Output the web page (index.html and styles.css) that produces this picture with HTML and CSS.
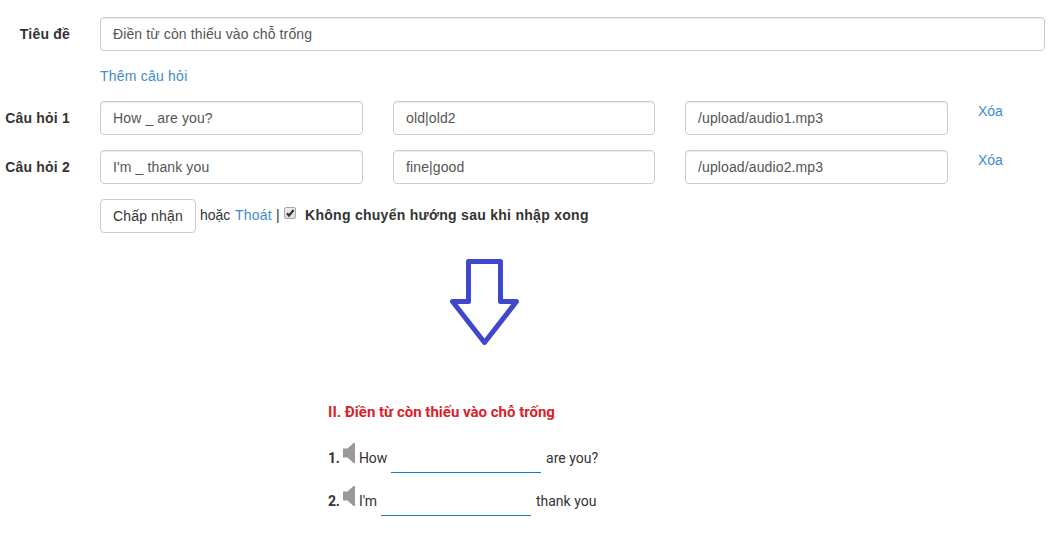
FILE: index.html
```html
<!DOCTYPE html>
<html lang="vi">
<head>
<meta charset="utf-8">
<title>Điền từ còn thiếu vào chỗ trống</title>
<link rel="stylesheet" href="styles.css">
</head>
<body>
<form class="form">
  <div class="row">
    <label class="label"><span>Tiêu đề</span></label>
    <div class="control title">Điền từ còn thiếu vào chỗ trống</div>
  </div>
  <div class="add"><a class="link">Thêm câu hỏi</a></div>
  <div class="row">
    <label class="label"><span>Câu hỏi 1</span></label>
    <div class="fields">
      <div class="control">How _ are you?</div>
      <div class="control">old|old2</div>
      <div class="control">/upload/audio1.mp3</div>
    </div>
    <a class="link remove">Xóa</a>
  </div>
  <div class="row">
    <label class="label"><span>Câu hỏi 2</span></label>
    <div class="fields">
      <div class="control">I'm _ thank you</div>
      <div class="control">fine|good</div>
      <div class="control">/upload/audio2.mp3</div>
    </div>
    <a class="link remove">Xóa</a>
  </div>
  <div class="actions">
    <button class="button" type="button">Chấp nhận</button>
    <span class="or">hoặc</span>
    <a class="link cancel">Thoát</a>
    <span class="bar">|</span>
    <svg class="check" viewBox="0 0 13 13"><defs><linearGradient id="g" x2="0" y2="1"><stop stop-color="#f0f0f0"/><stop offset="1" stop-color="#dcdcdc"/></linearGradient></defs><rect x=".5" y=".5" width="11" height="11" rx="1.5" fill="url(#g)" stroke="#a8a8a8"/><path d="M3 6.2 5 8.6 9.6 3" fill="none" stroke="#333" stroke-width="2.2"/></svg>
    <span class="stay">Không chuyển hướng sau khi nhập xong</span>
  </div>
</form>
<svg class="arrow" viewBox="0 0 70 88"><path d="M18.5 3.5H50.5V43.5H66.5L34.5 84.5 2.5 43.5H18.5Z" fill="#fff" stroke="#3f48cc" stroke-width="5" stroke-linejoin="round"/></svg>
<section class="quiz">
  <h2 class="heading">II. Điền từ còn thiếu vào chỗ trống</h2>
  <div class="question">
    <b class="num">1.</b>
    <svg class="speaker" viewBox="0 0 12 20"><path d="M0 5.5H4.5L10.5 0H12V20H10.5L4.5 14.5H0Z" fill="#999"/></svg>
    <span class="before">How</span><span class="blank"></span><span class="after">are you?</span>
  </div>
  <div class="question">
    <b class="num">2.</b>
    <svg class="speaker" viewBox="0 0 12 20"><path d="M0 5.5H4.5L10.5 0H12V20H10.5L4.5 14.5H0Z" fill="#999"/></svg>
    <span class="before">I'm</span><span class="blank"></span><span class="after">thank you</span>
  </div>
</section>
</body>
</html>
```
FILE: styles.css
```css
* { box-sizing: border-box; }
body { margin: 0; width: 1055px; height: 557px; overflow: hidden; background: #fff; color: #333; font: 14px/20px "Liberation Sans", Arial, sans-serif; }
span, a { white-space: nowrap; }
.form { padding: 17px 10px 0 0; display: flex; flex-direction: column; }
.row { display: flex; margin-bottom: 15px; }
.label { width: 70px; margin-right: 30px; padding-top: 7px; text-align: right; font-weight: bold; letter-spacing: .2px; flex: none; }
.control { height: 34px; padding: 6px 12px; border: 1px solid #ccc; border-radius: 4px; box-shadow: inset 0 1px 1px rgba(0,0,0,.075); color: #555; letter-spacing: .12px; }
.title { flex: 1; }
.link { color: #428bca; text-decoration: none; }
.add { height: 20px; margin: 0 0 15px 100px; letter-spacing: .22px; }
.fields { display: grid; grid-template-columns: 263px 262px 263px; gap: 30px; width: 848px; }
.remove { margin-left: 30px; }
.actions { display: flex; align-items: flex-start; margin-left: 100px; height: 34px; }
.button { width: 96px; height: 34px; padding: 0 12px; border: 1px solid #ccc; border-radius: 4px; background: #fff; color: #333; font: inherit; letter-spacing: .15px; text-align: left; }
.or { margin-left: 4px; width: 35px; padding-top: 6px; }
.cancel { width: 41px; padding-top: 6px; letter-spacing: .2px; }
.bar { width: 8px; padding-top: 6px; }
.check { width: 13px; height: 13px; margin: 8px 8px 0 0; }
.stay { padding-top: 6px; font-weight: bold; letter-spacing: .28px; }
.arrow { display: block; width: 70px; height: 88px; margin: 25px 0 0 450px; }
.quiz { margin: 56px 0 0 328px; font-family: Roboto, sans-serif; }
.heading { margin: 0 0 20px; font-size: 15px; line-height: 20px; font-weight: 700; color: #d8232a; }
.question { display: flex; height: 43px; line-height: 32px; }
.num { width: 15px; letter-spacing: -.2px; }
.speaker { width: 12px; height: 20px; margin: 1px 4px 0 0; }
.before { letter-spacing: -.15px; }
.blank { width: 150px; height: 31px; margin: 0 5px 0 4px; border-bottom: 1px solid #0b7dda; }
```
